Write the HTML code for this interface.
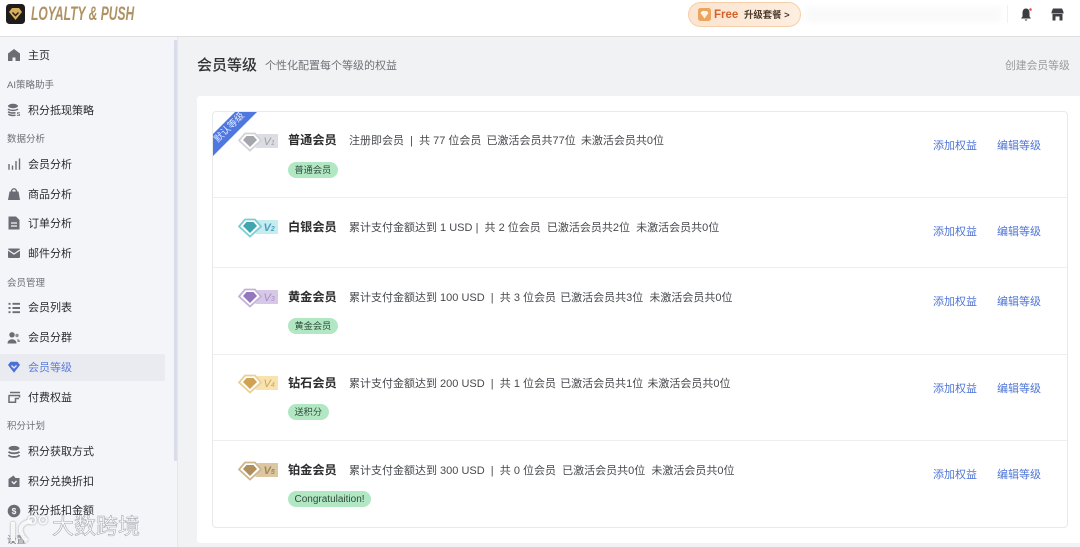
<!DOCTYPE html>
<html lang="zh">
<head>
<meta charset="utf-8">
<title>会员等级</title>
<style>
html,body{margin:0;padding:0}
body{width:1080px;height:547px;overflow:hidden;position:relative;background:#f1f2f4;font-family:"Liberation Sans","Noto Sans CJK SC",sans-serif;color:#333}
.a{position:absolute;white-space:nowrap}
#top{position:absolute;left:0;top:0;width:1080px;height:36px;background:#fff;border-bottom:1px solid #dfe0e2}
#side{position:absolute;left:0;top:37px;width:177px;height:510px;background:#f3f5f9;border-right:1px solid #e6e7ea;overflow:hidden}
#bar{position:absolute;left:174px;top:40px;width:3px;height:421px;background:#d9dce9;border-radius:1px}
.sec{position:absolute;left:7px;font-size:9.5px;line-height:12px;color:#6c6f75;white-space:nowrap}
.it{position:absolute;left:28px;font-size:11px;line-height:16px;color:#2a2b2e;white-space:nowrap}
.ic{position:absolute;left:7px;width:14px;height:14px}
#sel{position:absolute;left:0;top:354px;width:165px;height:27px;background:#e9ebf0;border-radius:0 2px 2px 0}
#card{position:absolute;left:197px;top:96px;width:883px;height:447px;background:#fff;border-radius:3px 0 0 3px}
#box{position:absolute;left:212px;top:111px;width:854px;height:415px;border:1px solid #e8e9eb;border-radius:4px;background:#fff}
.sep{position:absolute;left:213px;width:854px;height:1px;background:#edeef0}
.nm{position:absolute;left:288px;font-size:12.2px;line-height:18px;font-weight:700;color:#2c2c2e;white-space:nowrap}
.ds{position:absolute;left:349px;font-size:11px;line-height:16px;color:#47494d;white-space:nowrap}
.tag{position:absolute;left:288px;height:16px;line-height:16px;border-radius:8px;background:#b1e8c3;color:#2f4a3a;font-size:9.2px;padding:0 6.500px;white-space:nowrap}
.ac{position:absolute;font-size:11px;line-height:16px;color:#4f75d6;white-space:nowrap}
</style>
</head>
<body>
<div id="top"></div>

<!-- logo -->
<svg class="a" style="left:6px;top:4px" width="19" height="20" viewBox="0 0 19 20">
<rect width="19" height="20" rx="3.500" fill="#1e1d1b"/>
<path d="M3 8 L6 4 H13 L16 8 L9.500 16 Z" fill="#d9ab5c"/>
<path d="M6.500 8.500 L9.500 11.500 L12.500 8.500" fill="none" stroke="#1e1d1b" stroke-width="1.400"/>
</svg>
<div class="a" style="left:31px;top:3px;font-size:19px;line-height:23px;font-weight:700;font-style:italic;color:#ae9263;transform:scaleX(.635);transform-origin:0 0">LOYALTY &amp; PUSH</div>

<!-- upgrade pill -->
<div class="a" style="left:688px;top:2px;width:111px;height:23px;border:1px solid #f5cfa9;border-radius:13px;background:linear-gradient(90deg,#fce4cf,#fdeedf)"></div>
<svg class="a" style="left:698px;top:8px" width="13" height="13" viewBox="0 0 13 13">
<rect width="13" height="13" rx="2.500" fill="#eaa660"/>
<path d="M2.500 5 L4.200 3 H8.800 L10.500 5 L6.500 10.500 Z" fill="#fff2e2"/>
</svg>
<div class="a" style="left:714px;top:8px;font-size:11.500px;line-height:14px;font-weight:700;color:#d4622a">Free</div>
<div class="a" style="left:744px;top:8px;font-size:9.400px;line-height:14px;font-weight:700;color:#4a3a2c">升级套餐 &gt;</div>

<!-- blurred account -->
<div class="a" style="left:806px;top:7px;width:195px;height:15px;background:#f7f7f8;filter:blur(3px);opacity:.7"></div>
<div class="a" style="left:1007px;top:5px;width:1px;height:18px;background:#f0f0f0"></div>
<svg class="a" style="left:1019px;top:7px" width="15" height="15" viewBox="0 0 15 15">
<path d="M7 1.500 C4.300 1.500 3.500 4 3.500 6 V9.500 L2 11.500 H12 L10.500 9.500 V6 C10.500 4 9.700 1.500 7 1.500 Z" fill="#3b3c3f"/>
<path d="M5.500 12.500 H8.500 L7 14 Z" fill="#3b3c3f"/>
<circle cx="11.500" cy="2.500" r="1.300" fill="#e5484d"/>
</svg>
<svg class="a" style="left:1051px;top:8px" width="13" height="13" viewBox="0 0 13 13">
<path d="M2 .5 H11 L12.500 4 V5.500 H.5 V4 Z" fill="#3f4043"/>
<path d="M1.500 6 H11.500 V12.500 H8.500 V8.500 H4.500 V12.500 H1.500 Z" fill="#3f4043"/>
</svg>

<!-- sidebar -->
<div id="side"></div>
<div id="bar"></div>
<div id="sel"></div>

<svg class="ic" style="top:48px" viewBox="0 0 14 14"><path d="M7 1 L13 5.500 V13 H8.500 V9.500 H5.500 V13 H1 V5.500 Z" fill="#6a6d74"/></svg>
<div class="it" style="top:48px">主页</div>
<div class="sec" style="top:80px">AI策略助手</div>
<svg class="ic" style="top:103px" viewBox="0 0 14 14"><ellipse cx="6" cy="3" rx="5" ry="2.200" fill="#6a6d74"/><path d="M1 6 C3 7.800 9 7.800 11 6 M1 8.800 C3 10.200 6 10.200 8.500 9.800 M1.300 11.300 C3 12.400 6 12.600 8.500 12.300" fill="none" stroke="#6a6d74" stroke-width="1.500"/><text x="9.500" y="13" font-size="7" font-weight="700" fill="#6a6d74" font-family="Liberation Sans">s</text></svg>
<div class="it" style="top:103px">积分抵现策略</div>
<div class="sec" style="top:134px">数据分析</div>
<svg class="ic" style="top:157px" viewBox="0 0 14 14"><path d="M2 7 V12.800 M5.500 8.500 V12.800 M9 4 V12.800 M12.500 1.500 V12.800" stroke="#6a6d74" stroke-width="1.400" fill="none"/></svg>
<div class="it" style="top:157px">会员分析</div>
<svg class="ic" style="top:187px" viewBox="0 0 14 14"><path d="M2.500 4.500 H11.500 L13 13 H1 Z" fill="#6a6d74"/><path d="M4.500 5 C4.500 .8 9.500 .8 9.500 5" fill="none" stroke="#6a6d74" stroke-width="1.400"/></svg>
<div class="it" style="top:187px">商品分析</div>
<svg class="ic" style="top:216px" viewBox="0 0 14 14"><path d="M1.500 .5 H9 L12.500 4 V13.500 H1.500 Z" fill="#6a6d74"/><path d="M4 7 H10 M4 10 H10" stroke="#f3f5f9" stroke-width="1.300"/></svg>
<div class="it" style="top:216px">订单分析</div>
<svg class="ic" style="top:246px" viewBox="0 0 14 14"><rect x="1" y="2.500" width="12" height="9.500" rx="1" fill="#6a6d74"/><path d="M1 4 L7 8 L13 4" fill="none" stroke="#f3f5f9" stroke-width="1.200"/></svg>
<div class="it" style="top:246px">邮件分析</div>
<div class="sec" style="top:278px">会员管理</div>
<svg class="ic" style="top:301px" viewBox="0 0 14 14"><path d="M1.500 2.800 H3.500 M1.500 7 H3.500 M1.500 11.200 H3.500 M5.500 2.800 H13 M5.500 7 H13 M5.500 11.200 H13" stroke="#6a6d74" stroke-width="1.900" fill="none"/></svg>
<div class="it" style="top:300px">会员列表</div>
<svg class="ic" style="top:331px" viewBox="0 0 14 14"><circle cx="5" cy="3.800" r="2.700" fill="#6a6d74"/><path d="M.5 12.500 C.5 6.800 9.500 6.800 9.500 12.500 Z" fill="#6a6d74"/><circle cx="10" cy="4.500" r="1.700" fill="#8d9096"/><path d="M10.300 8 C12.300 8.300 13 9.500 13 11 H10.500" fill="#8d9096"/></svg>
<div class="it" style="top:330px">会员分群</div>
<svg class="ic" style="top:360px" viewBox="0 0 14 14"><path d="M1 5 L3.500 1.800 H10.500 L13 5 L7 12.800 Z" fill="#4d70d8"/><path d="M4.500 5.500 L7 8 L9.500 5.500" fill="none" stroke="#e9ebf0" stroke-width="1.300"/></svg>
<div class="it" style="top:360px;color:#5d7ddc">会员等级</div>
<svg class="ic" style="top:390px" viewBox="0 0 14 14"><path d="M3 2.500 H13 M1.500 5.500 H12.500 V7.500" fill="none" stroke="#6a6d74" stroke-width="1.500"/><path d="M2 5.500 V12.300 H8.500 V8.500 H12" fill="none" stroke="#6a6d74" stroke-width="1.500"/></svg>
<div class="it" style="top:390px">付费权益</div>
<div class="sec" style="top:421px">积分计划</div>
<svg class="ic" style="top:445px" viewBox="0 0 14 14"><ellipse cx="7" cy="3.200" rx="5.500" ry="2.300" fill="#6a6d74"/><path d="M1.500 6.800 C3.500 8.800 10.500 8.800 12.500 6.800 M1.500 10 C3.500 12.600 10.500 12.600 12.500 10" fill="none" stroke="#6a6d74" stroke-width="1.800"/></svg>
<div class="it" style="top:444px">积分获取方式</div>
<svg class="ic" style="top:474px" viewBox="0 0 14 14"><path d="M1.500 5 L6.500 1.500 L8.500 4 H12.500 V13 H1.500 Z" fill="#6a6d74"/><path d="M4.800 7.500 L7 9.700 L9.500 7" fill="none" stroke="#f3f5f9" stroke-width="1.300"/></svg>
<div class="it" style="top:474px">积分兑换折扣</div>
<svg class="ic" style="top:504px" viewBox="0 0 14 14"><circle cx="7" cy="7" r="6.300" fill="#6a6d74"/><text x="7" y="10" text-anchor="middle" font-size="8.500" font-weight="700" fill="#f3f5f9" font-family="Liberation Sans">$</text></svg>
<div class="it" style="top:503px">积分抵扣金额</div>
<div class="sec" style="top:535px">设置</div>

<!-- main header -->
<div class="a" style="left:197px;top:55px;font-size:15px;line-height:21px;font-weight:500;color:#303133">会员等级</div>
<div class="a" style="left:265px;top:58px;font-size:11px;line-height:16px;color:#6f7277">个性化配置每个等级的权益</div>
<div class="a" style="left:1005px;top:58px;font-size:10.800px;line-height:16px;color:#9a9b9f">创建会员等级</div>

<div id="card"></div>
<div id="box"></div>
<div class="sep" style="top:197px"></div>
<div class="sep" style="top:267px"></div>
<div class="sep" style="top:354px"></div>
<div class="sep" style="top:440px"></div>

<!-- V1 -->
<svg class="a" style="left:238px;top:131px" width="41" height="21" viewBox="0 0 41 21"><path d="M19 3 H40 V17 H17 L23 9.500 Z" fill="#dcdde3"/><path d="M1 9.500 L7 2.500 H17 L23 9.500 L12 19.500 Z" fill="#fff" stroke="#d2d3d8" stroke-width="1.800"/><path d="M5 9 L8.500 5 H15.500 L19 9 L12 16 Z" fill="#a4a6ac"/><text x="25.500" y="14" font-size="11" font-style="italic" fill="#9c9ea6" font-family="Liberation Sans">V<tspan font-size="7">1</tspan></text></svg>
<!-- ribbon -->
<svg class="a" style="left:213px;top:112px" width="45" height="45" viewBox="0 0 45 45"><path d="M22 0 H44 L0 44 V22 Z" fill="#4f77e0"/></svg>
<div class="a" style="left:206px;top:122px;width:48px;text-align:center;font-size:9.500px;line-height:12px;color:#dfe7fb;transform:rotate(-45deg)">默认等级</div>
<div class="nm" style="top:131px">普通会员</div>
<div class="ds" style="top:133px">注册即会员&nbsp; |&nbsp; 共 77 位会员<span style="margin-left:-1px">&nbsp; 已激活会员共77位</span><span style="margin-left:-1px">&nbsp; 未激活会员共0位</span></div>
<div class="tag" style="top:162px">普通会员</div>
<div class="ac" style="left:933px;top:138px">添加权益</div>
<div class="ac" style="left:997px;top:138px">编辑等级</div>

<!-- V2 -->
<svg class="a" style="left:238px;top:217px" width="41" height="21" viewBox="0 0 41 21"><path d="M19 3 H40 V17 H17 L23 9.500 Z" fill="#c5ecef"/><path d="M1 9.500 L7 2.500 H17 L23 9.500 L12 19.500 Z" fill="#fff" stroke="#79cdd3" stroke-width="1.800"/><path d="M5 9 L8.500 5 H15.500 L19 9 L12 16 Z" fill="#3ea7ad"/><text x="25.500" y="14" font-size="11" font-style="italic" font-weight="700" fill="#4a9fc0" font-family="Liberation Sans">V<tspan font-size="7">2</tspan></text></svg>
<div class="nm" style="top:218px">白银会员</div>
<div class="ds" style="top:220px">累计支付金额达到 1 USD<span style="margin-left:-3px">&nbsp; |&nbsp; 共 2 位会员&nbsp; 已激活会员共2位&nbsp; 未激活会员共0位</span></div>
<div class="ac" style="left:933px;top:224px">添加权益</div>
<div class="ac" style="left:997px;top:224px">编辑等级</div>

<!-- V3 -->
<svg class="a" style="left:238px;top:287px" width="41" height="21" viewBox="0 0 41 21"><path d="M19 3 H40 V17 H17 L23 9.500 Z" fill="#d6c8e6"/><path d="M1 9.500 L7 2.500 H17 L23 9.500 L12 19.500 Z" fill="#fff" stroke="#c3b1da" stroke-width="1.800"/><path d="M5 9 L8.500 5 H15.500 L19 9 L12 16 Z" fill="#9478bd"/><text x="25.500" y="14" font-size="11" font-style="italic" fill="#a58ec5" font-family="Liberation Sans">V<tspan font-size="7">3</tspan></text></svg>
<div class="nm" style="top:288px">黄金会员</div>
<div class="ds" style="top:290px">累计支付金额达到 100 USD&nbsp; |&nbsp; 共 3 位会员<span style="margin-left:-2px">&nbsp; 已激活会员共3位&nbsp; 未激活会员共0位</span></div>
<div class="tag" style="top:318px">黄金会员</div>
<div class="ac" style="left:933px;top:294px">添加权益</div>
<div class="ac" style="left:997px;top:294px">编辑等级</div>

<!-- V4 -->
<svg class="a" style="left:238px;top:373px" width="41" height="21" viewBox="0 0 41 21"><path d="M19 3 H40 V17 H17 L23 9.500 Z" fill="#f8e2ae"/><path d="M1 9.500 L7 2.500 H17 L23 9.500 L12 19.500 Z" fill="#fff" stroke="#ebcf94" stroke-width="1.800"/><path d="M5 9 L8.500 5 H15.500 L19 9 L12 16 Z" fill="#d0a253"/><text x="25.500" y="14" font-size="11" font-style="italic" fill="#c7a660" font-family="Liberation Sans">V<tspan font-size="7">4</tspan></text></svg>
<div class="nm" style="top:374px">钻石会员</div>
<div class="ds" style="top:376px">累计支付金额达到 200 USD&nbsp; |&nbsp; 共 1 位会员<span style="margin-left:-2px">&nbsp; 已激活会员共1位</span><span style="margin-left:-2px">&nbsp; 未激活会员共0位</span></div>
<div class="tag" style="top:404px">送积分</div>
<div class="ac" style="left:933px;top:381px">添加权益</div>
<div class="ac" style="left:997px;top:381px">编辑等级</div>

<!-- V5 -->
<svg class="a" style="left:238px;top:460px" width="41" height="21" viewBox="0 0 41 21"><path d="M19 3 H40 V17 H17 L23 9.500 Z" fill="#dcc7a2"/><path d="M1 9.500 L7 2.500 H17 L23 9.500 L12 19.500 Z" fill="#fff" stroke="#cdb68e" stroke-width="1.800"/><path d="M5 9 L8.500 5 H15.500 L19 9 L12 16 Z" fill="#b08f5f"/><text x="25.500" y="14" font-size="11" font-style="italic" font-weight="700" fill="#a08758" font-family="Liberation Sans">V<tspan font-size="7">5</tspan></text></svg>
<div class="nm" style="top:461px">铂金会员</div>
<div class="ds" style="top:463px">累计支付金额达到 300 USD&nbsp; |&nbsp; 共 0 位会员&nbsp; 已激活会员共0位&nbsp; 未激活会员共0位</div>
<div class="tag" style="top:491px;font-size:10px;line-height:17px">Congratulaition!</div>
<div class="ac" style="left:933px;top:467px">添加权益</div>
<div class="ac" style="left:997px;top:467px">编辑等级</div>

<!-- watermark -->
<svg class="a" style="left:8px;top:514px;filter:drop-shadow(0 0 1px #8f9197)" width="42" height="30" viewBox="0 0 42 30"><path d="M5 8 V27 M24 7 C11 9 9 17 19 27" fill="none" stroke="#fff" stroke-width="4" opacity=".9"/><circle cx="24" cy="6" r="3.700" fill="none" stroke="#fff" stroke-width="1.700" opacity=".9"/><circle cx="35" cy="6" r="3.700" fill="none" stroke="#fff" stroke-width="1.700" opacity=".9"/></svg>
<div class="a" style="left:52px;top:514px;font-size:22px;line-height:26px;color:rgba(255,255,255,.8);-webkit-text-stroke:.6px #a9abb0">大数跨境</div>
</body>
</html>
